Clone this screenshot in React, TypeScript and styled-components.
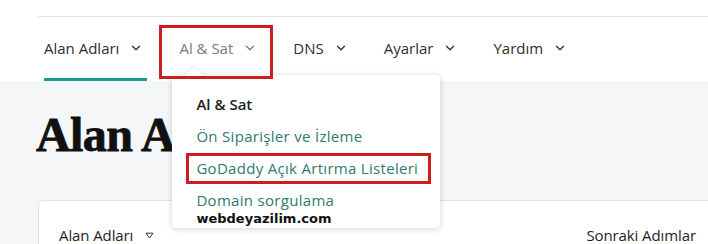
import React from "react";
import styled, { createGlobalStyle } from "styled-components";

const Global = createGlobalStyle`
  html, body { margin: 0; padding: 0; background: #ffffff; overflow: hidden; }
  body { font-family: "Open Sans", "Liberation Sans", sans-serif; width: 708px; height: 244px; }
  * { box-sizing: border-box; }
`;

const Page = styled.div`
  display: flex;
  flex-direction: column;
  width: 708px;
  height: 244px;
  overflow: hidden;
`;

const Header = styled.header`
  padding-top: 16px;
  background: #ffffff;
  position: relative;
  z-index: 2;
`;

const NavBar = styled.nav`
  margin-left: 38px;
  border-top: 1px solid #e3e3e3;
  height: 65px;
  display: flex;
  align-items: stretch;
  gap: 38px;
  padding-left: 6px;
`;

const NavItem = styled.div<{ $active?: boolean; $muted?: boolean }>`
  position: relative;
  display: flex;
  align-items: center;
  gap: 12px;
  font-size: 15px;
  color: ${(p) => (p.$muted ? "#7a7a7a" : "#2f2f2f")};
  padding-bottom: 2px;
  &::after {
    content: "";
    display: ${(p) => (p.$active ? "block" : "none")};
    position: absolute;
    left: 0;
    right: -6px;
    bottom: 0px;
    height: 3px;
    background: #1b9b98;
  }
`;

const Chevron = ({ color }: { color: string }) => (
  <svg width="10" height="6" viewBox="0 0 10 6" fill="none">
    <path d="M1.5 1.2l3.5 3.5 3.5-3.5" stroke={color} strokeWidth="1.3" strokeLinecap="round" strokeLinejoin="round" />
  </svg>
);

const RedFrame = styled.div<{ $l: number; $t: number; $w: number; $h: number }>`
  position: absolute;
  left: ${(p) => p.$l}px;
  top: ${(p) => p.$t}px;
  width: ${(p) => p.$w}px;
  height: ${(p) => p.$h}px;
  border: 3px solid #cc1d1f;
  pointer-events: none;
  z-index: 5;
`;

const Dropdown = styled.div`
  position: absolute;
  left: -7px;
  top: 58px;
  width: 268px;
  background: #ffffff;
  border-radius: 4px;
  box-shadow: 0 1px 6px rgba(0, 0, 0, 0.18);
  padding: 18px 0 1px 24px;
  display: flex;
  flex-direction: column;
  gap: 10px;
  z-index: 3;
  &::before {
    content: "";
    position: absolute;
    left: 15px;
    top: -6px;
    width: 14px;
    height: 14px;
    background: #ffffff;
    transform: rotate(45deg);
    box-shadow: -1px -1px 2px rgba(0, 0, 0, 0.08);
  }
`;

const MenuTitle = styled.div`
  font-size: 15px;
  font-weight: 600;
  line-height: 22px;
  color: #1e1e1e;
`;

const MenuLink = styled.div`
  position: relative;
  font-size: 15px;
  line-height: 22px;
  letter-spacing: 0.3px;
  color: #2f7a70;
  white-space: nowrap;
`;

const Watermark = styled.div`
  font-family: "DejaVu Sans", "Verdana", sans-serif;
  font-weight: 700;
  font-size: 13px;
  line-height: 16px;
  color: #111111;
  margin-top: -10px;
`;

const Main = styled.main`
  flex: 1;
  background: #f5f6f7;
  display: flex;
  flex-direction: column;
  position: relative;
  z-index: 1;
`;

const Title = styled.h1`
  margin: 0;
  padding: 26px 0 0 36px;
  height: 119px;
  font-family: "Liberation Serif", "Times New Roman", serif;
  font-weight: 700;
  font-size: 48px;
  line-height: 56px;
  color: #111111;
  letter-spacing: -0.6px;
  -webkit-text-stroke: 0.8px #111111;
`;

const Card = styled.section`
  margin-left: 38px;
  margin-right: -14px;
  flex: 1;
  background: #ffffff;
  border: 1px solid #e2e2e2;
  border-bottom: none;
  border-radius: 6px 6px 0 0;
  display: flex;
  justify-content: space-between;
  align-items: flex-start;
  padding: 24px 25px 0 20px;
`;

const CardLabel = styled.div`
  display: flex;
  align-items: center;
  gap: 12px;
  font-size: 15px;
  font-weight: 500;
  letter-spacing: -0.1px;
  color: #1e1e1e;
`;

const Triangle = () => (
  <svg width="9" height="7" viewBox="0 0 9 7" fill="none">
    <path d="M1 1.2h7L4.5 6z" stroke="#333" strokeWidth="1" strokeLinejoin="round" />
  </svg>
);

export default function App() {
  return (
    <>
      <Global />
      <Page>
        <Header>
          <NavBar>
            <NavItem $active>
              Alan Adları <Chevron color="#2f2f2f" />
            </NavItem>
            <NavItem $muted>
              Al &amp; Sat <Chevron color="#7a7a7a" />
              <RedFrame $l={-20} $t={8} $w={114} $h={54} />
              <Dropdown>
                <MenuTitle>Al &amp; Sat</MenuTitle>
                <MenuLink>Ön Siparişler ve İzleme</MenuLink>
                <MenuLink>
                  GoDaddy Açık Artırma Listeleri
                  <RedFrame $l={-10} $t={-4} $w={245} $h={31} />
                </MenuLink>
                <MenuLink>Domain sorgulama</MenuLink>
                <Watermark>webdeyazilim.com</Watermark>
              </Dropdown>
            </NavItem>
            <NavItem>
              DNS <Chevron color="#2f2f2f" />
            </NavItem>
            <NavItem>
              Ayarlar <Chevron color="#2f2f2f" />
            </NavItem>
            <NavItem>
              Yardım <Chevron color="#2f2f2f" />
            </NavItem>
          </NavBar>
        </Header>
        <Main>
          <Title>Alan Adları</Title>
          <Card>
            <CardLabel>
              Alan Adları <Triangle />
            </CardLabel>
            <CardLabel>Sonraki Adımlar</CardLabel>
          </Card>
        </Main>
      </Page>
    </>
  );
}
